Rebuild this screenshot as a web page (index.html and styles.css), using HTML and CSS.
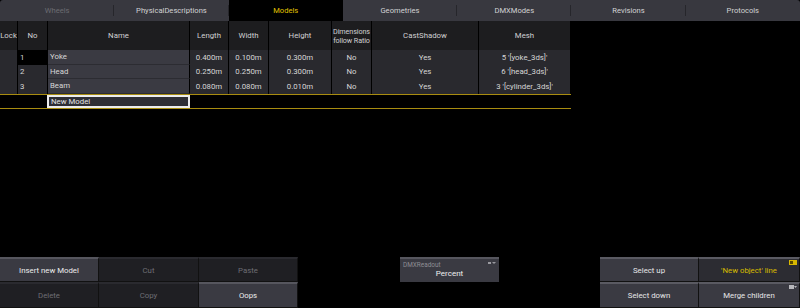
FILE: index.html
```html
<!DOCTYPE html>
<html lang="en">
<head>
    <meta charset="UTF-8">
    <meta name="viewport" content="width=device-width, initial-scale=1.0">
    <title>Models</title>
    <link rel="stylesheet" href="styles.css">
</head>
<body>

    <div class="screen">

        <!-- Tabs -->
        <div class="tabs">
            <div class="tab dim">Wheels</div>
            <div class="tab">PhysicalDescriptions</div>
            <div class="tab active">Models</div>
            <div class="tab">Geometries</div>
            <div class="tab">DMXModes</div>
            <div class="tab">Revisions</div>
            <div class="tab last">Protocols</div>
        </div>

        <!-- Table -->
        <div class="table">
            <div class="row head">
                <div class="cell">Lock</div>
                <div class="cell">No</div>
                <div class="cell">Name</div>
                <div class="cell">Length</div>
                <div class="cell">Width</div>
                <div class="cell">Height</div>
                <div class="cell two">Dimensions<br>follow Ratio</div>
                <div class="cell">CastShadow</div>
                <div class="cell">Mesh</div>
            </div>
            <div class="row item">
                <div class="cell gray"></div>
                <div class="cell left black">1</div>
                <div class="cell left name">Yoke</div>
                <div class="cell gray">0.400m</div>
                <div class="cell gray">0.100m</div>
                <div class="cell gray">0.300m</div>
                <div class="cell gray">No</div>
                <div class="cell gray">Yes</div>
                <div class="cell gray">5 '[yoke_3ds]'</div>
            </div>
            <div class="row item">
                <div class="cell gray"></div>
                <div class="cell left gray">2</div>
                <div class="cell left name">Head</div>
                <div class="cell gray">0.250m</div>
                <div class="cell gray">0.250m</div>
                <div class="cell gray">0.300m</div>
                <div class="cell gray">No</div>
                <div class="cell gray">Yes</div>
                <div class="cell gray">6 '[head_3ds]'</div>
            </div>
            <div class="row item">
                <div class="cell gray"></div>
                <div class="cell left gray">3</div>
                <div class="cell left name">Beam</div>
                <div class="cell gray">0.080m</div>
                <div class="cell gray">0.080m</div>
                <div class="cell gray">0.010m</div>
                <div class="cell gray">No</div>
                <div class="cell gray">Yes</div>
                <div class="cell gray">3 '[cylinder_3ds]'</div>
            </div>
            <div class="row newrow">
                <div class="cell"></div>
                <div class="cell"></div>
                <div class="cell left edit">New Model</div>
            </div>
        </div>

        <!-- Bottom buttons -->
        <div class="bottom">
            <div class="btns three">
                <div class="btn on">Insert new Model</div>
                <div class="btn off">Cut</div>
                <div class="btn off">Paste</div>
                <div class="btn off">Delete</div>
                <div class="btn off">Copy</div>
                <div class="btn on">Oops</div>
            </div>

            <div class="readout">
                <span class="readout-label">DMXReadout</span>
                <span class="readout-icon">
                    <svg width="8" height="4" viewBox="0 0 8 4"><rect x="0" y="1" width="3" height="2" fill="#9a9aa0"/><path d="M4 1h4L6 3z" fill="#9a9aa0"/></svg>
                </span>
                <span class="readout-value">Percent</span>
            </div>

            <div class="btns two-col">
                <div class="btn side">Select up</div>
                <div class="btn side yellow">'New object' line
                    <svg class="corner" width="8" height="5" viewBox="0 0 8 5"><rect x="0" y="0" width="8" height="5" fill="#d8b800"/><rect x="1" y="1" width="3" height="3" fill="#5a4a00"/></svg>
                </div>
                <div class="btn side">Select down</div>
                <div class="btn side">Merge children
                    <svg class="corner" width="8" height="4" viewBox="0 0 8 4"><rect x="0" y="0" width="5" height="4" fill="#b8b8bc"/><path d="M5 1h3L6.5 3z" fill="#b8b8bc"/></svg>
                </div>
            </div>
        </div>

    </div>

</body>
</html>
```

FILE: styles.css
```css
* {
    margin: 0;
    padding: 0;
    box-sizing: border-box;
    font-family: Roboto, "Liberation Sans", sans-serif;
}
body {
    background: #000;
    color: #d6d6d6;
    font-size: 7.8px;
}
.screen {
    width: 800px;
    height: 308px;
    display: flex;
    flex-direction: column;
}

/* tabs */
.tabs {
    display: flex;
    height: 21px;
    background: #38383f;
    border-radius: 3px 3px 0 0;
}
.tab {
    flex: 1;
    display: flex;
    align-items: center;
    justify-content: center;
    position: relative;
    color: #d2d2d4;
    font-size: 7.6px;
}
.tab::after {
    content: "";
    position: absolute;
    right: 0;
    top: 5px;
    height: 11px;
    border-right: 1px solid #26262b;
}
.tab.last::after,
.tab.active::after {
    display: none;
}
.tab.dim {
    color: #6c6c72;
}
.tab.active {
    background: #000;
    color: #e2c400;
}

/* table */
.table {
    width: 571px;
}
.row {
    display: grid;
    grid-template-columns: 18px 30px 142px 39px 40px 63px 40px 107px 92px;
}
.cell {
    display: flex;
    align-items: center;
    justify-content: center;
    border-right: 1px solid #000;
    white-space: nowrap;
    overflow: hidden;
}
.head {
    height: 29px;
    background: #1d1d1f;
}
.head .cell {
    color: #d0d0d2;
}
.head .two {
    font-size: 7.2px;
    line-height: 9px;
    text-align: center;
    overflow: visible;
    letter-spacing: -0.1px;
}
.item {
    height: 14.5px;
}
.left {
    justify-content: flex-start;
    padding-left: 2px;
}
.gray {
    background: #29292e;
}
.black {
    background: #000;
}
.name {
    background: #3a3a42;
    border-bottom: 1px solid #2c2c32;
}
.item:last-of-type .name {
    border-bottom: none;
}
.newrow {
    height: 15px;
    border-top: 1px solid #a88c10;
    border-bottom: 1px solid #a88c10;
}
.newrow .cell {
    border-right: none;
}
.edit {
    margin-left: -1px;
    background: #2e2e34;
    border: 2px solid #ececec !important;
    color: #e4e4e4;
}

/* bottom */
.bottom {
    margin-top: auto;
    height: 51px;
    display: flex;
    align-items: flex-start;
}
.btns {
    display: grid;
    height: 51px;
}
.three {
    width: 298px;
    grid-template-columns: 99px 100px 99px;
    grid-template-rows: 25px 26px;
}
.two-col {
    margin-left: 101px;
    width: 200px;
    grid-template-columns: 99px 101px;
    grid-template-rows: 25px 26px;
}
.btn {
    display: flex;
    align-items: center;
    justify-content: center;
    position: relative;
    font-size: 7.8px;
    border-right: 1px solid #111;
    border-bottom: 1px solid #111;
}
.btn.on {
    background: #3a3a42;
    border-top: 2px solid #56565e;
    color: #ececec;
}
.btn.off {
    background: #1f1f23;
    border-top: 2px solid #2a2a2f;
    color: #6e6e74;
}
.btn.side {
    background: #3a3a42;
    border-top: 2px solid #5a5a62;
    color: #e6e6e8;
}
.btn.yellow {
    background: #2c2c32;
    color: #d8bc00;
}
.corner {
    position: absolute;
    top: 1px;
    right: 2px;
}

.readout {
    margin-left: 102px;
    width: 99px;
    height: 25px;
    background: #3a3a42;
    border-top: 2px solid #56565e;
    position: relative;
    display: flex;
    align-items: center;
    justify-content: center;
}
.readout-label {
    position: absolute;
    left: 3px;
    top: 2px;
    font-size: 6.4px;
    color: #8e8e94;
}
.readout-icon {
    position: absolute;
    right: 3px;
    top: -1px;
}
.readout-value {
    margin-top: 6px;
    font-size: 8px;
    color: #eeeeee;
}
```
